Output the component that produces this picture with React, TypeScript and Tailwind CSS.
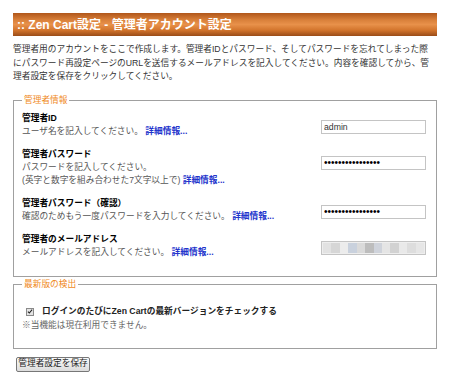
import React from 'react';

const font = "font-['Liberation_Sans','Noto_Sans_CJK_JP',sans-serif]";

function DetailLink() {
  return <a className="font-bold text-[#2233cc]">詳細情報...</a>;
}

interface RowProps {
  label: string;
  children: React.ReactNode;
  field: React.ReactNode;
}

function Row({ label, children, field }: RowProps) {
  return (
    <div className="mb-[10px] flex items-start justify-between">
      <div>
        <div className="font-bold leading-[13px] text-black">{label}</div>
        <div className="leading-[13px] text-[#555]">{children}</div>
      </div>
      <div className="mt-[8px]">{field}</div>
    </div>
  );
}

const inputCls =
  'block h-[14px] w-[105px] border border-[#c4c4c4] bg-white px-[2px] text-[8.7px] leading-[12px] text-[#333] outline-none';

const pwCls =
  'block h-[14px] w-[105px] border border-[#c4c4c4] bg-white px-[2px] text-[10px] leading-[12px] text-black outline-none';

const blur = ['#e2e2e2', '#d6d6d6', '#ececec', '#c9d1dd', '#dadada', '#bdbdbd', '#cfd3db', '#e5e5e5', '#d2d2d2', '#e9e9e9', '#dddddd', '#e6e6e6'];

export default function App() {
  return (
    <div className={`${font} h-[386px] w-[450px] bg-white px-[13px] pt-[13px] text-[8.7px] text-[#333]`}>
      <div className="flex h-[23px] items-center bg-[linear-gradient(to_bottom,#b0561a,#d9803a_30%,#e8914a_50%,#d2742c_75%,#9a4c18)] pl-[4px] text-[12px] font-bold text-white">
        :: Zen Cart設定 - 管理者アカウント設定
      </div>

      <p className="mb-[10px] mt-[7px] leading-[13.5px] text-[#333]">
        管理者用のアカウントをここで作成します。管理者IDとパスワード、そしてパスワードを忘れてしまった際
        <br />
        にパスワード再設定ページのURLを送信するメールアドレスを記入してください。内容を確認してから、管
        <br />
        理者設定を保存をクリックしてください。
      </p>

      <fieldset className="border border-[#a0a0a0] pb-[7px] pl-[8px] pr-[10px] pt-[5px]">
        <legend className="px-[2px] leading-[13px] text-[#f08a24]">管理者情報</legend>
        <Row label="管理者ID" field={<input className={inputCls} defaultValue="admin" readOnly />}>
          ユーザ名を記入してください。 <DetailLink />
        </Row>
        <Row
          label="管理者パスワード"
          field={<input type="password" className={pwCls} defaultValue="abcdefghijklmnop" readOnly />}
        >
          パスワードを記入してください。
          <br />
          (英字と数字を組み合わせた7文字以上で) <DetailLink />
        </Row>
        <Row
          label="管理者パスワード（確認）"
          field={<input type="password" className={pwCls} defaultValue="abcdefghijklmnop" readOnly />}
        >
          確認のためもう一度パスワードを入力してください。 <DetailLink />
        </Row>
        <Row
          label="管理者のメールアドレス"
          field={
            <div className="flex h-[14px] w-[105px] border border-[#c4c4c4] bg-[#eee] p-[1px]">
              {blur.map((c, i) => (
                <span key={i} className="h-full flex-1" style={{ background: c }} />
              ))}
            </div>
          }
        >
          メールアドレスを記入してください。 <DetailLink />
        </Row>
      </fieldset>

      <fieldset className="mt-[1px] border border-[#a0a0a0] pb-[16px] pl-[8px] pr-[10px] pt-[14px]">
        <legend className="px-[2px] leading-[13px] text-[#f08a24]">最新版の検出</legend>
        <div className="flex h-[14px] items-center">
          <span className="ml-[4px] mr-[8px] flex h-[8px] w-[8px] items-center justify-center border border-[#8a8a8a] bg-[#e4e4e4]">
            <svg viewBox="0 0 8 8" className="h-[7px] w-[7px]">
              <path d="M1.2 4.2 L3.1 6 L6.8 1.6" fill="none" stroke="#222" strokeWidth="1.4" />
            </svg>
          </span>
          <span className="font-bold text-[#222]">ログインのたびにZen Cartの最新バージョンをチェックする</span>
        </div>
        <div className="leading-[13px] text-[#666]">※当機能は現在利用できません。</div>
      </fieldset>

      <button className="ml-[3px] mt-[8px] flex h-[15px] w-[74px] items-center justify-center rounded-[2px] border border-[#777] bg-[linear-gradient(to_bottom,#fafafa,#dcdcdc)] text-[8.7px] text-[#222]">
        管理者設定を保存
      </button>
    </div>
  );
}
